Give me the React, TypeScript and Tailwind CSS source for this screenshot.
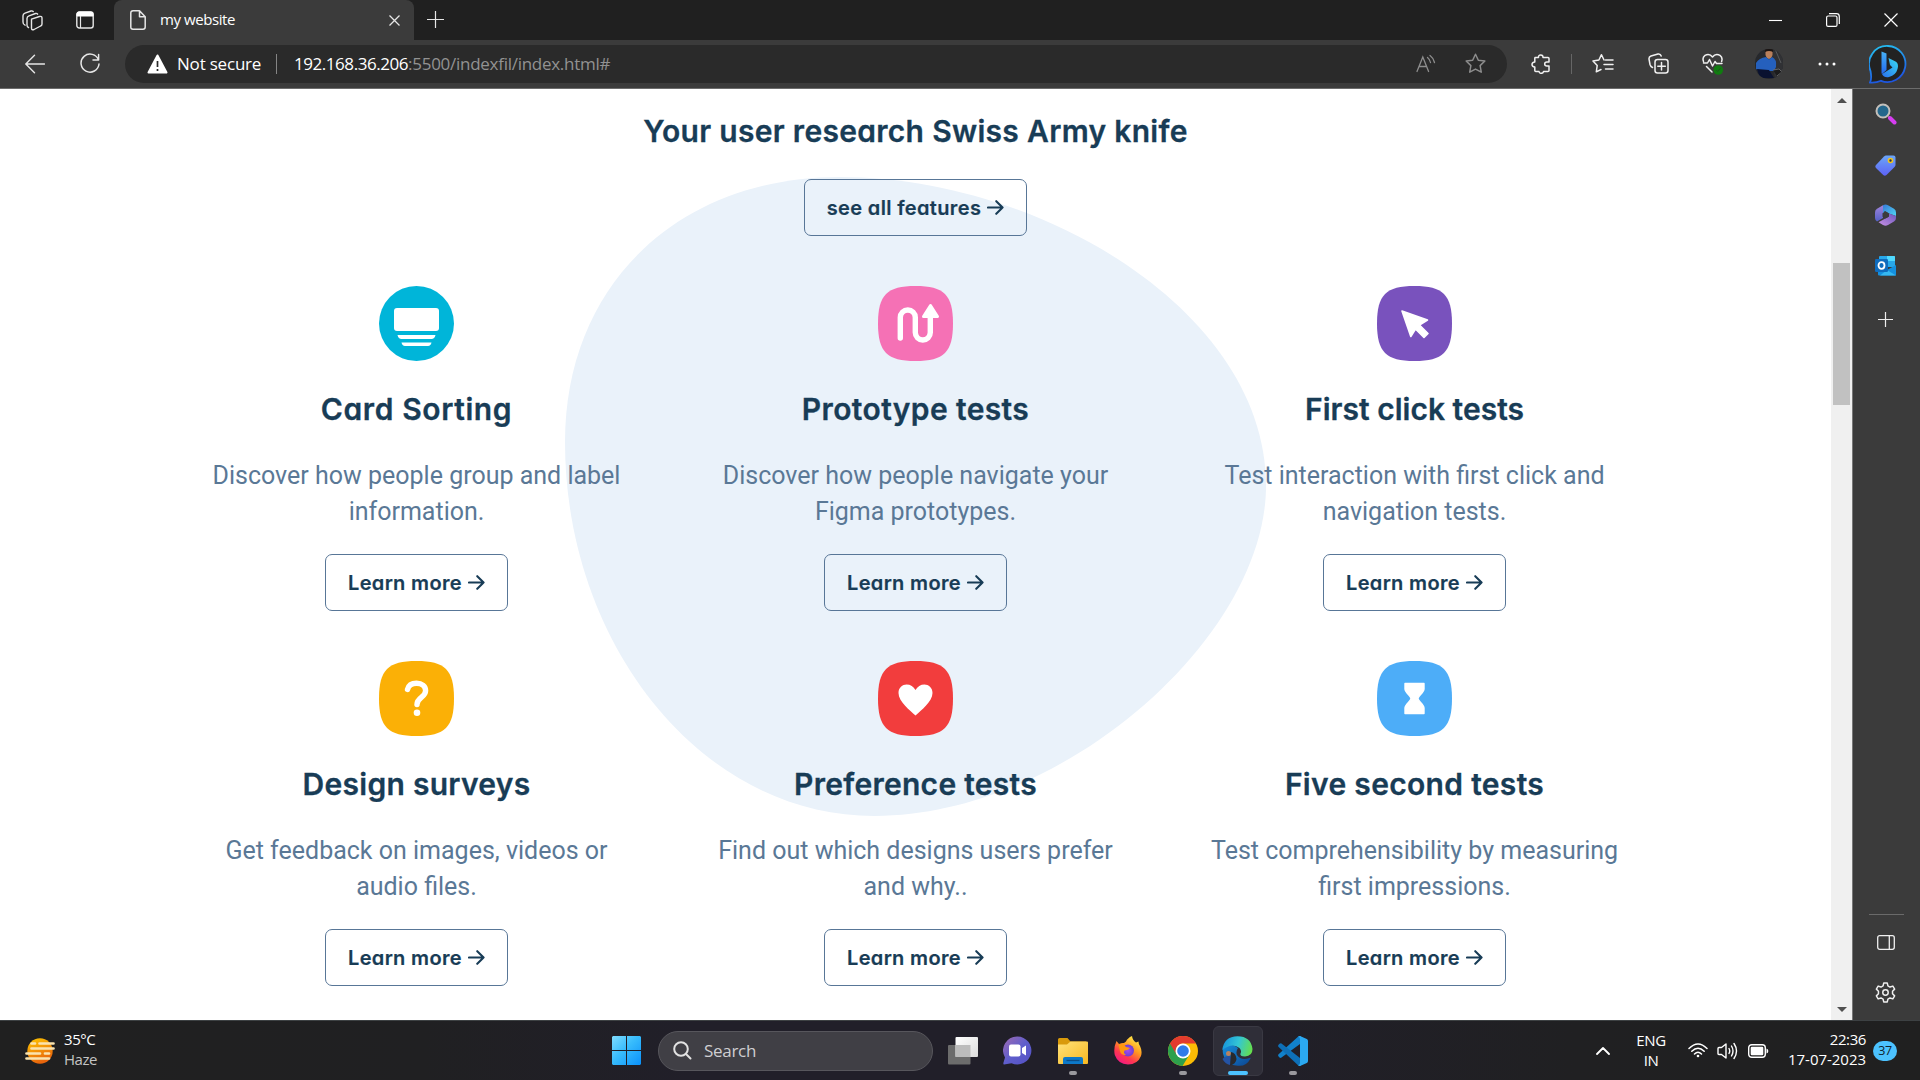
import React from 'react';

type Feature = { title: string; tracking: string; lines: [string, string]; icon: React.ReactNode };

const SQUIRCLE = 'M37.5 0C66 0 75 9 75 37.5S66 75 37.5 75 0 66 0 37.5 9 0 37.5 0Z';

function Badge({ fill, children }: { fill: string; children: React.ReactNode }) {
  return (
    <svg viewBox="0 0 75 75" className="block size-[75px]">
      <path d={SQUIRCLE} fill={fill} />
      {children}
    </svg>
  );
}

const features: Feature[] = [
  {
    title: 'Card Sorting',
    tracking: 'tracking-[0.6px]',
    lines: ['Discover how people group and label', 'information.'],
    icon: (
      <svg viewBox="0 0 75 75" className="block size-[75px]">
        <circle cx="37.5" cy="37.5" r="37.5" fill="#00b5d9" />
        <rect x="15" y="22" width="45" height="23" rx="3" fill="#fff" />
        <path d="M18.5 49H56.5C56 51.5 54.5 53 52.5 53H22.5C20.5 53 19 51.5 18.5 49ZM22.5 56.5H52.5C52 58.5 51 60 49 60H26C24 60 23 58.5 22.5 56.5Z" fill="#fff" />
      </svg>
    ),
  },
  {
    title: 'Prototype tests',
    tracking: 'tracking-[0.38px]',
    lines: ['Discover how people navigate your', 'Figma prototypes.'],
    icon: (
      <Badge fill="#f571b5">
        <path d="M22.3 52V31.5a7.5 7.5 0 0 1 15 0V46.5a7.5 7.5 0 0 0 15 0V28" fill="none" stroke="#fff" strokeWidth="5.4" strokeLinecap="round" />
        <path d="M52.5 19.5L59.5 30.5H45.5Z" fill="#fff" stroke="#fff" strokeWidth="3" strokeLinejoin="round" />
      </Badge>
    ),
  },
  {
    title: 'First click tests',
    tracking: 'tracking-[0.02px]',
    lines: ['Test interaction with first click and', 'navigation tests.'],
    icon: (
      <Badge fill="#7952bd">
        <path d="M25 25L50.5 34L42.5 39L51 47.5L47 51.5L38.5 43L33.8 50.5Z" fill="#fff" stroke="#fff" strokeWidth="1.6" strokeLinejoin="round" />
      </Badge>
    ),
  },
  {
    title: 'Design surveys',
    tracking: 'tracking-[0.27px]',
    lines: ['Get feedback on images, videos or', 'audio files.'],
    icon: (
      <Badge fill="#fbb006">
        <path d="M28.5 28.5C29.5 24.5 33 22.3 37.5 22.3C43 22.3 46.6 25.3 46.6 29.8C46.6 36.5 38 36.5 38 43.5" fill="none" stroke="#fff" strokeWidth="5.4" strokeLinecap="round" />
        <circle cx="38" cy="51.8" r="3.3" fill="#fff" />
      </Badge>
    ),
  },
  {
    title: 'Preference tests',
    tracking: 'tracking-[0.28px]',
    lines: ['Find out which designs users prefer', 'and why..'],
    icon: (
      <Badge fill="#f23d3d">
        <path d="M37.5 54.5C32 49.5 20.5 40.5 20.5 32C20.5 26.5 24.5 23.5 28.5 23.5C32.5 23.5 35.5 25.5 37.5 29C39.5 25.5 42.5 23.5 46.5 23.5C50.5 23.5 54.5 26.5 54.5 32C54.5 40.5 43 49.5 37.5 54.5Z" fill="#fff" />
      </Badge>
    ),
  },
  {
    title: 'Five second tests',
    tracking: 'tracking-[0.32px]',
    lines: ['Test comprehensibility by measuring', 'first impressions.'],
    icon: (
      <Badge fill="#4dadf8">
        <path d="M28 22.5H47V28C47 31.5 41 35 41 37.5C41 40 47 43.5 47 47V52.5H28V47C28 43.5 34 40 34 37.5C34 35 28 31.5 28 28Z" fill="#fff" stroke="#fff" strokeWidth="1.4" strokeLinejoin="round" />
      </Badge>
    ),
  },
];

function OutlineButton({ label, width }: { label: string; width: string }) {
  return (
    <button className={`flex h-[57px] items-center justify-center gap-[6px] rounded-[7px] border border-[#587697] text-[20px] leading-none font-semibold tracking-[0.35px] text-[#183c56] ${width}`}>
      <span className="[-webkit-text-stroke:0.2px_#183c56]">{label}</span>
      <svg viewBox="0 0 18 18" className="h-[18px] w-[17px] shrink-0" fill="none" stroke="currentColor" strokeWidth="2.2" strokeLinecap="round" strokeLinejoin="round">
        <path d="M1 8.5H16.5M9.8 1.8L16.5 8.5L9.8 15.2" />
      </svg>
    </button>
  );
}

function FeatureCard({ feature }: { feature: Feature }) {
  return (
    <article className="flex flex-col items-center text-center">
      {feature.icon}
      <h2 className={`mt-[30px] text-[30px] leading-9 font-semibold text-[#183c56] [-webkit-text-stroke:0.3px_#183c56] ${feature.tracking}`}>{feature.title}</h2>
      <p className="mt-[31px] mb-6 font-['Roboto',sans-serif] text-[25px] leading-9 whitespace-nowrap text-[#5a7896]">
        {feature.lines[0]}
        <br />
        {feature.lines[1]}
      </p>
      <OutlineButton label="Learn more" width="w-[183.5px]" />
    </article>
  );
}

function WebPage() {
  return (
    <main className="relative h-[931px] w-[1831px] shrink-0 overflow-hidden bg-white font-['Inter',sans-serif] [font-feature-settings:'cv11']">
      <svg viewBox="565 177 701 639" className="absolute top-[88px] left-[565px] h-[639px] w-[701px]" aria-hidden="true">
        <path d="M840 177C1040 177 1266 311 1266 486C1266 636 1064.500 816 874.500 816C699.500 816 565 642 565 442C565 285 678 177 840 177Z" fill="#eaf2fa" />
      </svg>
      <div className="relative flex flex-col items-center pt-6">
        <h1 className="mb-[30px] text-[30px] leading-9 font-semibold tracking-[0.3px] text-[#183c56] [-webkit-text-stroke:0.3px_#183c56]">Your user research Swiss Army knife</h1>
        <OutlineButton label="see all features" width="w-[223px]" />
        <section className="mt-[50px] grid w-[1497px] grid-cols-3 gap-y-[50px]">
          {features.map((f) => (
            <FeatureCard key={f.title} feature={f} />
          ))}
        </section>
      </div>
    </main>
  );
}

function TabStrip() {
  return (
    <div className="flex h-10 items-stretch bg-[#202020] text-white">
      <div className="flex w-[114px] items-center rounded-br-md pl-[22px]">
        <svg viewBox="0 0 21 21" className="size-[21px]" fill="none" stroke="#e6e6e6" strokeWidth="1.4" strokeLinejoin="round" strokeLinecap="round">
          <path d="M9.5 9.2L17.5 6.5Q20 5.9 20 8V14Q20 15.5 18.6 16L12 19.5Q9.5 20.5 9.5 18Z" />
          <path d="M6.5 17.5Q5 17 5 15V8.5Q5 6.5 7 5.8L13.5 3.5Q15 3.1 15.6 4.2M3 15.2Q1 14.5 1 12V5.8Q1 4 3 3.2L9 1Q10.5 .6 11.2 1.5" />
        </svg>
        <svg viewBox="0 0 18 18" className="ml-[33px] size-[18px]" fill="none">
          <rect x=".8" y="1" width="16.4" height="16" rx="2.5" stroke="#e6e6e6" strokeWidth="1.4" />
          <path d="M1 5V3Q1 1 3 1H15Q17 1 17 3V5Z" fill="#fff" stroke="#fff" />
          <path d="M4.5 5V17" stroke="#e6e6e6" strokeWidth="1.2" />
        </svg>
      </div>
      <div className="flex w-[300px] items-center rounded-t-lg bg-[#3b3b3b] pl-4">
        <svg viewBox="0 0 16 20" className="h-5 w-4" fill="none" stroke="#e6e6e6" strokeWidth="1.5" strokeLinejoin="round">
          <path d="M3 .8H9.5L15.2 6.8V17Q15.2 19.2 13 19.2H3Q.8 19.2 .8 17V3Q.8 .8 3 .8ZM9.5 .8V6.8H15.2" />
        </svg>
        <span className="ml-[14px] pb-0.5 text-[15px] tracking-[-0.42px]">my website</span>
        <svg viewBox="0 0 11 11" className="ml-auto mr-[14px] size-[11px]" stroke="#e6e6e6" strokeWidth="1.3">
          <path d="M.5 .5L10.5 10.5M10.5 .5L.5 10.5" />
        </svg>
      </div>
      <svg viewBox="0 0 17 17" className="mt-[11px] ml-[13px] size-[17px]" stroke="#e6e6e6" strokeWidth="1.2">
        <path d="M8.5 0V17M0 8.5H17" />
      </svg>
      <div className="ml-auto flex items-center pr-[22px]">
        <svg viewBox="0 0 13 13" className="mr-[44px] size-[13px]" stroke="#fff" strokeWidth="1.1">
          <path d="M0 6.5H13" />
        </svg>
        <svg viewBox="0 0 14 14" className="mr-[44px] size-[14px]" fill="none" stroke="#fff" strokeWidth="1.2">
          <rect x=".6" y="3" width="10.4" height="10.4" rx="1.5" />
          <path d="M3 .7H10.5Q13.3 .7 13.3 3.5V11" />
        </svg>
        <svg viewBox="0 0 14 14" className="size-[14px]" stroke="#fff" strokeWidth="1.2">
          <path d="M.5 .5L13.5 13.5M13.5 .5L.5 13.5" />
        </svg>
      </div>
    </div>
  );
}

const STAR = 'M10 1.2L12.7 6.9L18.9 7.7L14.4 12L15.5 18.3L10 15.3L4.5 18.3L5.6 12L1.1 7.7L7.3 6.9Z';

function BingIcon() {
  return (
    <svg viewBox="0 0 38 39" className="h-[39px] w-[38px]">
      <defs>
        <linearGradient id="bingRing" x1="0" y1="0" x2=".3" y2="1">
          <stop offset="0" stopColor="#25c6f2" />
          <stop offset="1" stopColor="#1e56e0" />
        </linearGradient>
        <linearGradient id="bingB" x1="0" y1="0" x2="0" y2="1">
          <stop offset="0" stopColor="#46b1f5" />
          <stop offset="1" stopColor="#2368ef" />
        </linearGradient>
        <linearGradient id="bingTail" x1="1" y1="0" x2="0" y2="1">
          <stop offset="0" stopColor="#38dcf0" />
          <stop offset="1" stopColor="#2a70f0" />
        </linearGradient>
      </defs>
      <path d="M19 1A18 18 0 1 1 12 35.8Q7 38 1 37.5Q3 34 1.5 26A18 18 0 0 1 19 1Z" fill="#222" stroke="url(#bingRing)" strokeWidth="1.8" />
      <path d="M12.5 6.5L17.5 8.5V25L13 29Q12.3 28 12.5 25Z" fill="url(#bingB)" />
      <path d="M19.5 13L27 16.8Q30 19 28.5 24Q27 30 20 32Q15 33 13 29L23.5 22.5L21 20Z" fill="url(#bingTail)" />
    </svg>
  );
}

function Avatar() {
  return (
    <svg viewBox="0 0 28 30" className="h-[30px] w-[28px] overflow-hidden rounded-full">
      <rect width="28" height="30" fill="#26282c" />
      <path d="M15 0H28V30H20Z" fill="#303134" />
      <path d="M20 0L26 14M22 30L28 20" stroke="#595a5c" strokeWidth="1" />
      <path d="M10.5 1H17.500V6Q16.500 9.500 14 10Q11.500 9.500 10.500 6Z" fill="#b9805c" />
      <path d="M10 3Q9.500 0 11 0H17Q18.500 0 18 3Q14 .8 10 3Z" fill="#1b1412" />
      <path d="M1 14Q4 9 11 8L14 10.5L17 8Q22 10 21 18L19 22H6L1 20Z" fill="#2560bd" />
      <path d="M2 20L14 21L19 29H5Z" fill="#0a1230" />
      <path d="M18 21L24 20L27 23L22 27" fill="#1b1b1c" stroke="#777" strokeWidth=".8" />
    </svg>
  );
}

function Toolbar() {
  return (
    <div className="flex h-[49px] items-center border-b border-[#6c6c6c] bg-[#3b3b3b] pb-px text-white">
      <svg viewBox="0 0 20 20" className="ml-[25px] size-5" fill="none" stroke="#e6e6e6" strokeWidth="1.4" strokeLinecap="round" strokeLinejoin="round">
        <path d="M19.5 10H1M9.5 1.2L.8 10L9.5 18.8" />
      </svg>
      <svg viewBox="0 0 20 21" className="ml-[35px] h-[21px] w-5" fill="none" stroke="#e6e6e6" strokeWidth="1.5" strokeLinecap="round" strokeLinejoin="round">
        <path d="M18.5 7A9 9 0 1 0 19 11M18.6 1.5V7H13" />
      </svg>
      <div className="ml-[25px] flex h-[38px] w-[1382px] items-center rounded-full bg-[#2a2a2a] pl-[22px] text-[17px]">
        <svg viewBox="0 0 21 20" className="h-5 w-[21px]">
          <path d="M10.5 1.5L19.5 18.5H1.5Z" fill="#fff" stroke="#fff" strokeWidth="2" strokeLinejoin="round" />
          <path d="M10.5 7V13M10.5 15V17" stroke="#2a2a2a" strokeWidth="1.7" />
        </svg>
        <span className="ml-[9px] w-[84px] tracking-[-0.2px] whitespace-nowrap">Not secure</span>
        <span className="ml-[15px] h-5 w-px bg-[#858585]" />
        <span className="ml-[17px] tracking-[-0.45px]">192.168.36.206</span>
        <span className="tracking-[-0.27px] text-[#929292]">:5500/indexfil/index.html#</span>
        <svg viewBox="0 0 20 19" className="ml-auto h-[19px] w-5" fill="none" stroke="#8d8d8d" strokeWidth="1.3" strokeLinecap="round">
          <path d="M1 17.5L6.8 3L12.6 17.5M3 12.5H10.6M11.5 3.5Q14 5.5 14.5 8.5M14 1.5Q17.5 4 18.5 8.5" />
        </svg>
        <svg viewBox="0 0 20 20" className="ml-[29px] mr-[21px] size-[21px]" fill="none" stroke="#8d8d8d" strokeWidth="1.4" strokeLinejoin="round">
          <path d={STAR} />
        </svg>
      </div>
      <svg viewBox="0 0 20 20" className="ml-[24px] size-5" fill="none" stroke="#f0f0f0" strokeWidth="1.5" strokeLinejoin="round">
        <path d="M4 3.5H7.5Q7.3 1 9.7 1T12 3.5H17Q18 3.5 18 4.5V8H16Q13.7 8 13.7 10T16 12H18V16.5Q18 17.5 17 17.5H12.5Q12.3 19.3 10.3 19.3T8 17.5H4.8Q3.8 17.5 3.8 16.5V13Q1 12.8 1 10.5T3.8 8V4.5Z" />
      </svg>
      <span className="ml-[20px] h-5 w-px bg-[#666]" />
      <svg viewBox="0 0 22 20" className="ml-[20px] h-[21px] w-[22px]" fill="none" stroke="#f0f0f0" strokeWidth="1.5" strokeLinejoin="round" strokeLinecap="round">
        <path d="M12 6.5L9.5 1.2L6.9 6.5L1 7.6L5.2 12L4.3 18.3L9 16M13.5 6.5H21M12 11H21M13.5 15.5H21" />
      </svg>
      <svg viewBox="0 0 21 21" className="ml-[34px] size-[21px]" fill="none" stroke="#f0f0f0" strokeWidth="1.5" strokeLinejoin="round" strokeLinecap="round">
        <rect x="7" y="6.5" width="13" height="13.5" rx="2.5" />
        <path d="M13.5 9.5V17M9.8 13.3H17.3M4.5 14.5Q2.5 13.5 2 11.5L1 6Q.8 3.8 3 3L10 1Q12.5 .6 13.2 3" />
      </svg>
      <svg viewBox="0 0 22 22" className="ml-[33px] size-[22px]" fill="none" stroke="#f0f0f0" strokeWidth="1.5" strokeLinejoin="round" strokeLinecap="round">
        <path d="M1.5 8.5Q0 4.5 3 2.3Q7.5 0 10.5 4Q13.5 0 18 2.3Q21 4.5 19.6 8.5M1.5 10H5.5L7.5 6.5L10.5 13L13 8.5L14.5 10.5H20M4.5 13.5L10 19" />
        <circle cx="16.3" cy="17" r="4.8" fill="#107c10" stroke="none" />
        <path d="M14.5 17.5L15.7 18.5L18.2 15.5" stroke="#22521f" strokeWidth="1" />
      </svg>
      <div className="ml-[31px]"><Avatar /></div>
      <svg viewBox="0 0 18 4" className="ml-[35px] h-1 w-[18px]" fill="#fff">
        <circle cx="2" cy="2" r="1.5" />
        <circle cx="9" cy="2" r="1.5" />
        <circle cx="16" cy="2" r="1.5" />
      </svg>
      <div className="ml-[33px] pt-px"><BingIcon /></div>
    </div>
  );
}

function ScrollBar() {
  return (
    <div className="flex w-[22px] shrink-0 flex-col items-center border-r border-[#777] bg-[#f0f0f0]">
      <svg viewBox="0 0 10 5" className="mt-[9px] h-[5px] w-[10px]" fill="#505050"><path d="M5 0L10 5H0Z" /></svg>
      <div className="mt-[160px] h-[142px] w-[17px] bg-[#c1c1c1]" />
      <svg viewBox="0 0 10 5" className="mt-auto mb-[8px] h-[5px] w-[10px]" fill="#505050"><path d="M0 0H10L5 5Z" /></svg>
    </div>
  );
}

function SideBar() {
  return (
    <aside className="flex w-[67px] shrink-0 flex-col items-center bg-[#3b3b3b] pr-[2px]">
      <svg viewBox="0 0 22 22" className="mt-[14px] size-[22px]">
        <path d="M13.5 13.5L16 16" stroke="#aaa" strokeWidth="2" />
        <path d="M15 15L19.5 19.5" stroke="#d63df0" strokeWidth="4" strokeLinecap="round" />
        <circle cx="8" cy="8" r="6.5" fill="#24678c" stroke="#c4c0bb" strokeWidth="2" />
      </svg>
      <svg viewBox="0 0 21 21" className="mt-[30px] size-[21px]">
        <defs>
          <linearGradient id="tag" x1="0" y1="0" x2="0" y2="1"><stop offset="0" stopColor="#6ba6f7" /><stop offset="1" stopColor="#5d62f5" /></linearGradient>
        </defs>
        <path d="M11 .5H18.5Q20.5 .5 20.5 2.5V10Q20.5 11 19.5 12L11.5 20Q9.8 21.3 8.2 20L1 13Q-.3 11.5 1 10L9 1.5Q10 .5 11 .5Z" fill="url(#tag)" />
        <circle cx="15.5" cy="5.5" r="2" fill="#24314d" stroke="#f2c51c" strokeWidth="1.6" />
      </svg>
      <svg viewBox="0 0 21 22" className="mt-[28px] h-[22px] w-[21px]">
        <defs>
          <linearGradient id="m1" x1="0" y1="0" x2="1" y2="1"><stop offset="0" stopColor="#3471d4" /><stop offset="1" stopColor="#52dcf5" /></linearGradient>
          <linearGradient id="m2" x1="0" y1="0" x2="0" y2="1"><stop offset="0" stopColor="#a185dc" /><stop offset="1" stopColor="#5460c6" /></linearGradient>
          <linearGradient id="m3" x1="0" y1="1" x2="1" y2="0"><stop offset="0" stopColor="#c991e4" /><stop offset="1" stopColor="#6b56bd" /></linearGradient>
        </defs>
        <path d="M8 1.2Q10.5 -.3 13 1.2L19 4.7Q21 6 21 8.5V12L14 9.5L9.5 7L8 13L5.5 14Z" fill="url(#m1)" />
        <path d="M8 1.2L2 4.7Q0 6 0 8.5V14Q0 16 2 17.5L8 14V6Z" fill="url(#m2)" />
        <path d="M21 12V14Q21 16 19 17.5L13 21Q10.5 22.3 8 21L3.5 18.2L14 12.5V9.5Z" fill="url(#m3)" />
        <path d="M10.5 7.3L13.7 9.2V12.8L10.5 14.5L7.5 12.8V9.2Z" fill="#3b3b3b" />
      </svg>
      <svg viewBox="0 0 21 21" className="mt-[29px] size-[21px]">
        <rect x="4" y="1" width="16" height="11" rx="1" fill="#28a8ea" />
        <path d="M12 1H19Q20 1 20 2V6H12Z" fill="#50d9ff" />
        <path d="M3 12L12 15L21 10V20Q21 20.5 20 20.5H4Q3 20.5 3 19.5Z" fill="#1490df" />
        <path d="M12 15L21 20.5H5Z" fill="#35b8f1" />
        <rect x="0" y="4" width="13" height="13" rx="1.2" fill="#0f6cbd" />
        <ellipse cx="6.5" cy="10.5" rx="3" ry="3.3" fill="none" stroke="#fff" strokeWidth="1.8" />
      </svg>
      <svg viewBox="0 0 15 15" className="mt-[36px] size-[15px]" stroke="#ededed" strokeWidth="1.2"><path d="M7.5 0V15M0 7.5H15" /></svg>
      <div className="mt-auto ml-[2px] h-px w-[35px] bg-[#6a6a6a]" />
      <svg viewBox="0 0 18 15" className="mt-5 h-[15px] w-[18px]" fill="none" stroke="#f0f0f0" strokeWidth="1.3">
        <rect x=".7" y=".7" width="16.6" height="13.6" rx="2" /><path d="M12.3 .7V14.3" />
      </svg>
      <svg viewBox="0 0 20 20" className="mt-[32px] mb-[17px] size-[21px]" fill="none" stroke="#f0f0f0" strokeWidth="1.4" strokeLinejoin="round">
        <path d="M8.3 1H11.7L12.3 3.7L14.3 4.8L17 3.9L18.7 6.8L16.7 8.8V11.2L18.7 13.2L17 16.1L14.3 15.2L12.3 16.3L11.7 19H8.3L7.7 16.3L5.7 15.2L3 16.1L1.3 13.2L3.3 11.2V8.8L1.3 6.8L3 3.9L5.7 4.8L7.7 3.7Z" />
        <circle cx="10" cy="10" r="2.6" />
      </svg>
    </aside>
  );
}

function WeatherIcon() {
  return (
    <svg viewBox="0 0 30 26" className="h-[26px] w-[30px]">
      <defs><linearGradient id="sun" x1="0" y1="0" x2=".4" y2="1"><stop offset="0" stopColor="#ffc800" /><stop offset="1" stopColor="#e8650c" /></linearGradient></defs>
      <circle cx="15" cy="13" r="12.7" fill="url(#sun)" />
      <path d="M6.5 5.5H10M14.5 5.5H28.5M6.5 10.5H28.5M1.5 15.5H15M20 15.5H24M1.5 20.5H24" stroke="#fae3ae" strokeWidth="2.7" strokeLinecap="round" />
    </svg>
  );
}

function TaskApp({ children, indicator, active }: { children: React.ReactNode; indicator?: boolean; active?: boolean }) {
  return (
    <div className="flex w-[55px] shrink-0 justify-center">
      <div className={active ? 'flex h-[50px] w-[50px] flex-col items-center rounded-md border border-[#3a3943] bg-[#2f2e38] pt-[9px]' : 'flex h-[50px] w-[50px] flex-col items-center pt-[10px]'}>
        <div className="flex h-[30px] items-center">{children}</div>
        {active && <span className="mt-[5px] h-1 w-5 shrink-0 rounded-full bg-[#4cc2ff]" />}
        {indicator && <span className="mt-[5px] h-1 w-2 shrink-0 rounded-full bg-[#9a999e]" />}
      </div>
    </div>
  );
}

function TaskBar() {
  return (
    <footer className="flex h-[60px] items-center border-t border-[#3d4143] bg-[linear-gradient(90deg,#202020_0%,#202022_22%,#211f29_36%,#211f29_64%,#202022_82%,#202020_100%)] text-white">
      <div className="flex w-[612px] items-center pl-[25px]">
        <WeatherIcon />
        <div className="ml-[9px] pb-[3px] text-[15px] leading-5 tracking-[-0.45px]">
          <div>35°C</div>
          <div className="text-[#c4c4c4]">Haze</div>
        </div>
      </div>
      <svg viewBox="0 0 29 29" className="size-[29px] shrink-0">
        <defs><linearGradient id="win" x1="0" y1="0" x2="29" y2="29" gradientUnits="userSpaceOnUse"><stop offset="0" stopColor="#80dcff" /><stop offset=".45" stopColor="#38bcfc" /><stop offset="1" stopColor="#0a90fa" /></linearGradient></defs>
        <path d="M1 0H14V14H0V1ZM15 0H28L29 1V14H15ZM0 15H14V29H1L0 28ZM15 15H29V28L28 29H15Z" fill="url(#win)" />
      </svg>
      <div className="ml-[17px] flex h-10 w-[275px] shrink-0 items-center rounded-full border border-[#57565c] bg-[#403f45] pl-[14px]">
        <svg viewBox="0 0 19 19" className="size-[19px]" fill="none" stroke="#e2e2e2" strokeWidth="2" strokeLinecap="round">
          <circle cx="8" cy="8" r="6.8" /><path d="M13 13L17.5 17.5" />
        </svg>
        <span className="ml-[12px] text-[17px] tracking-[-0.3px] text-[#cfced1]">Search</span>
      </div>
      <div className="ml-[2px] flex">
        <TaskApp>
          <svg viewBox="0 0 30 28" className="h-7 w-[30px]">
            <defs><linearGradient id="tv" x1="0" y1="0" x2="1" y2="1"><stop offset="0" stopColor="#fff" /><stop offset="1" stopColor="#dcdcdc" /></linearGradient></defs>
            <rect x="0" y="8" width="22.5" height="19.5" rx="1" fill="#6c6c6c" />
            <rect x="7.5" y="0" width="22.5" height="20" rx="1" fill="url(#tv)" />
            <path d="M7.5 8H22.5V20H7.5Z" fill="#bcbcbc" />
          </svg>
        </TaskApp>
        <TaskApp>
          <svg viewBox="0 0 29 29" className="size-[29px]">
            <defs><linearGradient id="chat" x1="0" y1="0" x2="1" y2="1"><stop offset="0" stopColor="#a06ab0" /><stop offset=".5" stopColor="#5f5ecc" /><stop offset="1" stopColor="#5350c4" /></linearGradient></defs>
            <path d="M14.5 .5A14 14 0 1 1 8.5 27.2L1 28.5Q0 28 .5 26.5L2 21.5A14 14 0 0 1 14.5 .5Z" fill="url(#chat)" />
            <rect x="6" y="8.5" width="11.5" height="12" rx="2" fill="#fff" /><path d="M19 12L23 9.5V19.5L19 17Z" fill="#fff" />
          </svg>
        </TaskApp>
        <TaskApp indicator>
          <svg viewBox="0 0 30 26" className="h-[26px] w-[30px]">
            <defs><linearGradient id="fold" x1="0" y1="0" x2="1" y2="1"><stop offset="0" stopColor="#ffe27a" /><stop offset="1" stopColor="#f8b820" /></linearGradient></defs>
            <path d="M0 1.5Q0 0 1.5 0H9.5L12.5 3.5H28V10H0Z" fill="#d99a0b" />
            <path d="M0 6.5H9L12.5 3.5H29Q30 3.5 30 4.5V25Q30 26 29 26H1Q0 26 0 25Z" fill="url(#fold)" />
            <path d="M5 26V21Q5 19 7 19H23Q25 19 25 21V26Z" fill="#0d78c8" /><path d="M8.5 22.5H21.5" stroke="#0b4c86" strokeWidth="1.3" />
          </svg>
        </TaskApp>
        <TaskApp>
          <svg viewBox="0 0 28 29" className="h-[29px] w-7">
            <defs>
              <linearGradient id="ff" x1=".8" y1="0" x2=".2" y2="1"><stop offset="0" stopColor="#fff44f" /><stop offset=".4" stopColor="#ff9a1f" /><stop offset=".7" stopColor="#ff3750" /><stop offset="1" stopColor="#f0148c" /></linearGradient>
              <radialGradient id="ffc"><stop offset="0" stopColor="#a44bf2" /><stop offset="1" stopColor="#6d3fd1" /></radialGradient>
            </defs>
            <path d="M2.5 5L5 8Q8 6.500 10 7L12 5.5Q13.5 2 18 0Q18.5 4 22 6.5L24.5 5.5Q24.5 8 26 10Q28.5 15 27 20Q23.5 28.5 14 28.5Q4 28 .8 19Q-.8 12 2.5 5Z" fill="url(#ff)" />
            <circle cx="14" cy="14.5" r="6" fill="url(#ffc)" />
            <path d="M4.5 9Q9 6.5 12 11L16 12Q13.5 14.5 10.5 14.5Q9 17 12 19Q7 19.5 6 15Z" fill="#ff980e" />
          </svg>
        </TaskApp>
        <TaskApp indicator>
          <svg viewBox="0 0 30 30" className="size-[30px]">
            <circle cx="15" cy="15" r="15" fill="#fbbc05" />
            <path d="M15 15L2 7.5A15 15 0 0 0 14.5 30L21.5 18.5Z" fill="#2da04c" />
            <path d="M2 7.5A15 15 0 0 1 28 7.5H15A7.5 7.5 0 0 0 8.5 18.7Z" fill="#e33b2e" />
            <circle cx="15" cy="15" r="7.5" fill="#fff" /><circle cx="15" cy="15" r="5.8" fill="#2f7bea" />
          </svg>
        </TaskApp>
        <TaskApp active>
          <svg viewBox="0 0 31 30" className="h-[30px] w-[31px]">
            <defs>
              <linearGradient id="e1" x1="0" y1=".4" x2="1" y2=".6"><stop offset="0" stopColor="#1795dc" /><stop offset=".5" stopColor="#34c6d4" /><stop offset="1" stopColor="#66e04a" /></linearGradient>
              <linearGradient id="e2" x1="0" y1="0" x2="1" y2="1"><stop offset="0" stopColor="#168fdc" /><stop offset="1" stopColor="#0c4591" /></linearGradient>
            </defs>
            <path d="M1 12A14.8 14.8 0 0 0 14 29.5Q24 31.5 28.5 22.5Q29 21.5 27.5 22Q19 25 15 19Q13.5 15.5 16 12Q8 5 1 12Z" fill="url(#e2)" />
            <path d="M.3 14Q2 .5 15.5 .3Q29 .5 30.5 13Q30.5 20 23 20.5Q17.5 20.5 18.5 17.5Q20 15 17.5 12Q10 6 .3 14Z" fill="url(#e1)" />
            <circle cx="6.5" cy="17.5" r="2.5" fill="#b9825f" />
            <path d="M.5 23Q3 19.5 8 20L11 25L8 29Q3 28 .5 23Z" fill="#2453a4" />
            <path d="M9 16Q14 17 14.5 23Q14 28 8 29.5Z" fill="#29292c" />
          </svg>
        </TaskApp>
        <TaskApp indicator>
          <svg viewBox="0 0 30 30" className="size-[30px]">
            <path d="M22 8L3.5 21.5Q2.5 22.3 1.5 21.5L.4 20.2Q-.3 19.2 .6 18.3L20 .8L23 0Z" fill="#1181cb" />
            <path d="M22 22L3.5 7.5Q2.5 7 1.5 7.8L.4 9.1Q-.3 10 .6 11L20 29.2L23 30Z" fill="#0e70b8" />
            <path d="M22 0L28.8 3Q30 3.6 30 5V25Q30 26.4 28.8 27L22 30Q20.5 30 20 29.2Q22 29 22 27V3Q22 1 20 .8Q20.5 0 22 0Z" fill="#2ba9f1" />
          </svg>
        </TaskApp>
      </div>
      <div className="ml-auto flex items-center text-[15px] leading-5 tracking-[-0.4px]">
        <svg viewBox="0 0 14 8" className="h-2 w-[14px]" fill="none" stroke="#fff" strokeWidth="1.8" strokeLinecap="round" strokeLinejoin="round"><path d="M1 7L7 1L13 7" /></svg>
        <div className="ml-[25px] w-[32px] pb-px text-center"><div>ENG</div><div>IN</div></div>
        <svg viewBox="0 0 20 15" className="ml-[21px] h-[15px] w-5" fill="none" stroke="#fff" strokeWidth="1.5" strokeLinecap="round">
          <path d="M1 5.5Q10 -3.5 19 5.5M3.8 8.3Q10 2 16.2 8.3M6.5 11Q10 7.5 13.5 11" /><circle cx="10" cy="13" r="1.3" fill="#fff" stroke="none" />
        </svg>
        <svg viewBox="0 0 21 18" className="ml-[9px] h-[18px] w-[21px]" fill="none" stroke="#fff" strokeWidth="1.4" strokeLinecap="round" strokeLinejoin="round">
          <path d="M1 6.5Q1 5.5 2 5.5H4.5L9 2V16L4.5 12.5H2Q1 12.5 1 11.5ZM12 6.5Q13.5 9 12 11.5M14.5 4Q17.5 9 14.5 14M17 1.5Q22 9 17 16.5" />
        </svg>
        <svg viewBox="0 0 21 14" className="ml-[10px] h-[14px] w-[21px]">
          <rect x=".7" y=".7" width="16.6" height="12.6" rx="3" fill="none" stroke="#fff" strokeWidth="1.4" /><rect x="2.7" y="2.7" width="12.6" height="8.6" rx="1.2" fill="#fff" /><path d="M18.5 4.5Q20.3 5 20.3 7T18.5 9.5Z" fill="#fff" />
        </svg>
        <div className="ml-[17px] w-[80px] pb-[3px] text-right whitespace-nowrap"><div>22:36</div><div className="tracking-[-0.03px]">17-07-2023</div></div>
        <div className="mr-[23px] ml-[7px] flex h-5 w-6 items-center justify-center rounded-full bg-[#4cc2ff] text-[12.5px] tracking-[-0.3px] text-[#10222d]">37</div>
      </div>
    </footer>
  );
}

export default function App() {
  return (
    <div className="flex h-[1080px] w-[1920px] flex-col overflow-hidden bg-[#3b3b3b] font-['Open_Sans',sans-serif]">
      <TabStrip />
      <Toolbar />
      <div className="flex h-[931px] shrink-0">
        <WebPage />
        <ScrollBar />
        <SideBar />
      </div>
      <TaskBar />
    </div>
  );
}
